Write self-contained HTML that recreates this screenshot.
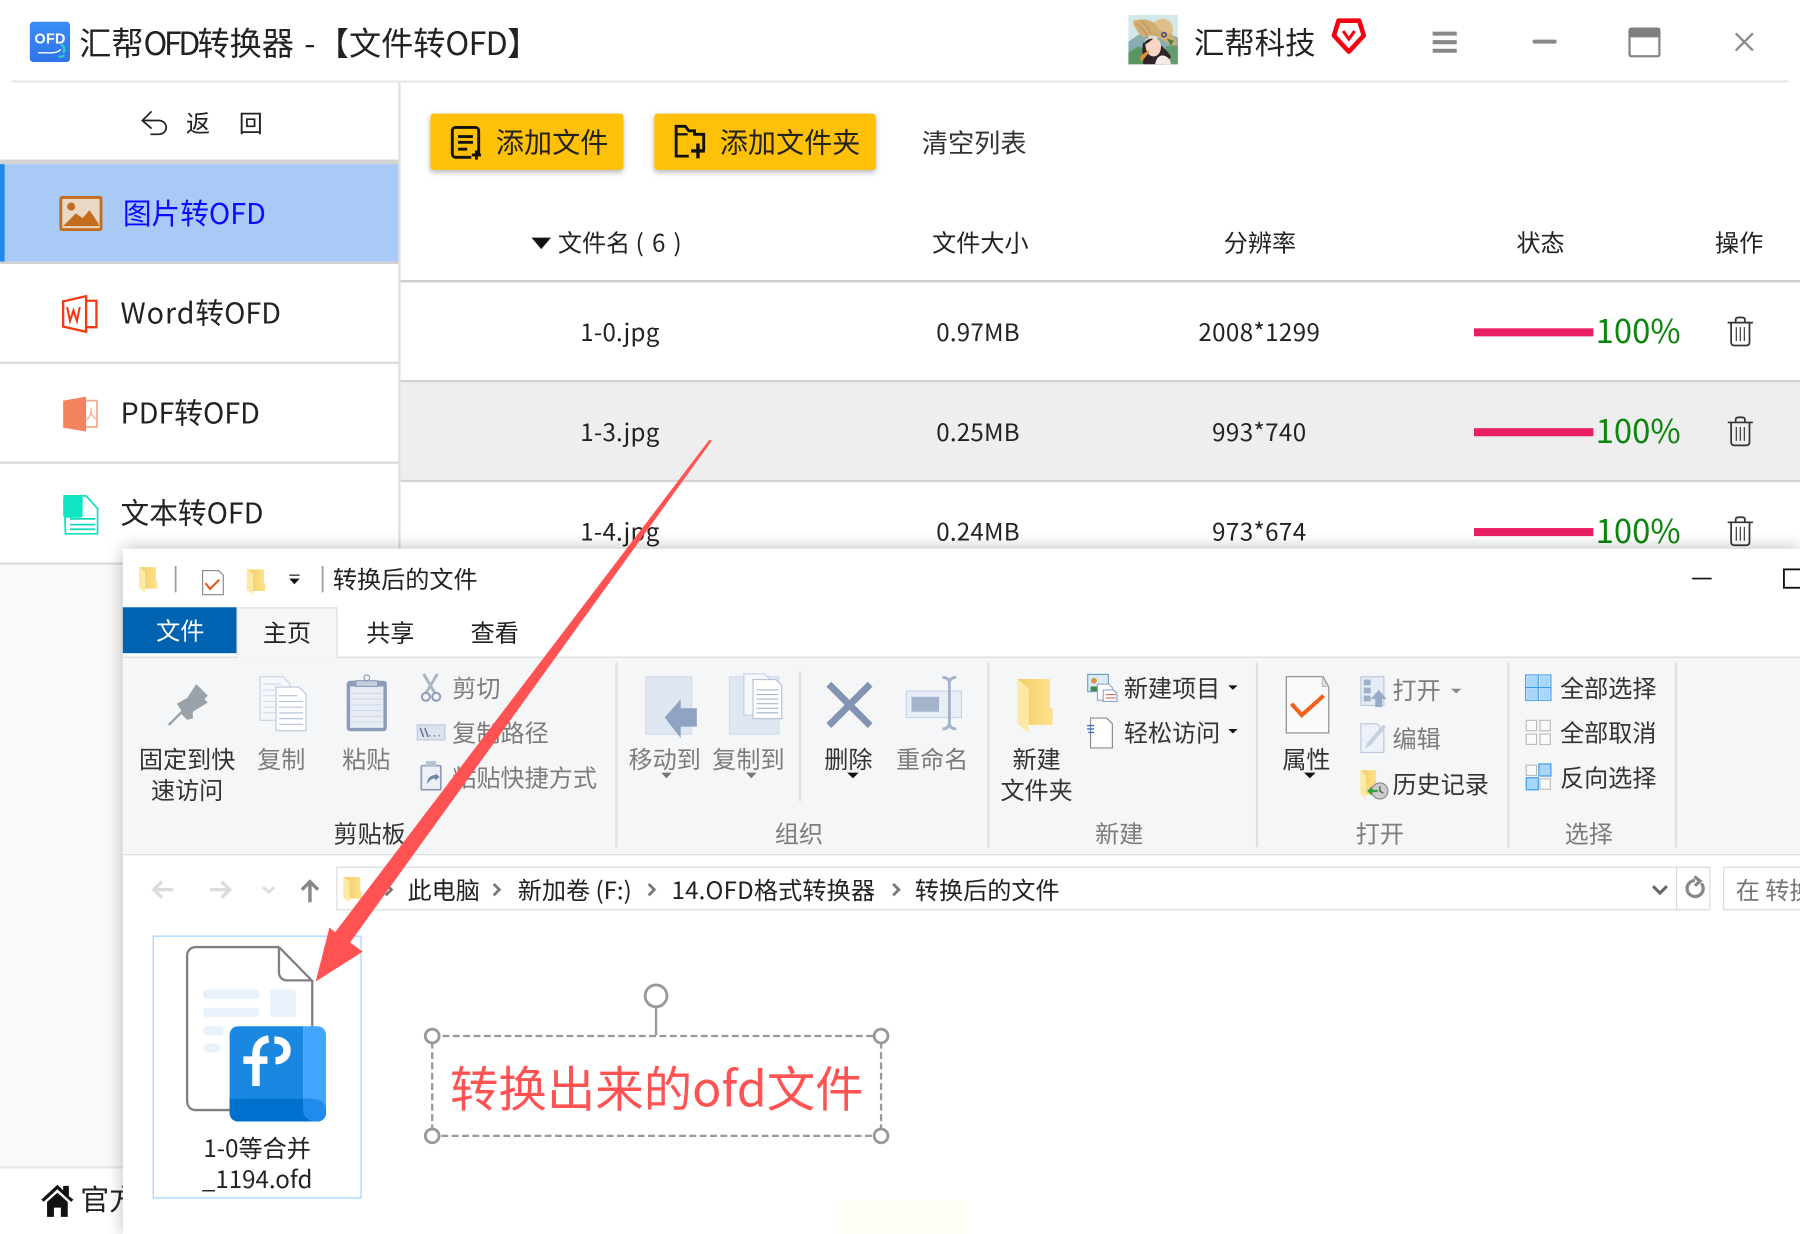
<!DOCTYPE html>
<html lang="zh-CN"><head><meta charset="utf-8"><title>汇帮OFD转换器</title>
<style>
html,body{margin:0;padding:0;background:#fff;width:1800px;height:1234px;overflow:hidden}
#w{position:absolute;left:0;top:0;width:1568px;height:1075px;transform:scale(1.14796);transform-origin:0 0;overflow:hidden;background:#fff;font-family:"Noto Sans CJK SC","Liberation Sans",sans-serif;color:#222}
.t{position:absolute;white-space:nowrap;line-height:0;font-size:21px}
.c{transform:translateX(-50%)}
.b{position:absolute}
.g{color:#7c7c7c}
.d{color:#333}
.r{letter-spacing:.2px}
svg{position:absolute;left:0;top:0}
</style></head><body><div id="w">

<!-- title bar -->
<div class="b" style="left:26px;top:19px;width:35px;height:35px;border-radius:3px;background:linear-gradient(#3a8df5,#2f74ea)"></div>
<div class="t" style="left:30px;top:34px;font-size:12.5px;font-weight:700;color:#fff;font-family:'Liberation Sans',sans-serif;letter-spacing:.3px">OFD</div>
<div class="t" style="left:69px;top:37px;font-size:28px">汇帮<span style="letter-spacing:-3px">OFD</span></div>
<div class="t" style="left:172px;top:37px;font-size:28px">转换器</div>
<div class="t" style="left:265px;top:37px;font-size:28px">-</div>
<div class="t" style="left:276px;top:37px;font-size:28px">【文件转<span style="letter-spacing:-.6px">OFD</span>】</div>
<div class="t" style="left:1040px;top:36px;font-size:26.5px">汇帮科技</div>
<div class="b" style="left:10px;top:70px;width:1548px;height:2px;background:#e8e8e8"></div>

<!-- sidebar -->
<div class="b" style="left:347px;top:72px;width:2px;height:420px;background:#e0e0e0"></div>
<div class="t" style="left:162px;top:107px;font-size:21px">返</div>
<div class="t" style="left:208px;top:107px;font-size:21px">回</div>
<div class="b" style="left:0;top:139px;width:347px;height:4px;background:#d4d4d4"></div>
<div class="b" style="left:0;top:143px;width:347px;height:85px;background:#a9caf6"></div>
<div class="b" style="left:0;top:143px;width:4px;height:85px;background:#2288ee"></div>
<div class="b" style="left:0;top:228px;width:347px;height:2px;background:#d0d0d0"></div>
<div class="b" style="left:0;top:315px;width:347px;height:2px;background:#d8d8d8"></div>
<div class="b" style="left:0;top:402px;width:347px;height:2px;background:#d8d8d8"></div>
<div class="b" style="left:0;top:490px;width:347px;height:526px;background:#f9f9f9;border-top:2px solid #ddd;box-sizing:border-box"></div>
<div class="b" style="left:0;top:1016px;width:347px;height:2px;background:#e8e8e8"></div>
<div class="t" style="left:107px;top:185px;font-size:25px;color:#0a0aff">图片转OFD</div>
<div class="t" style="left:105px;top:272px;font-size:25px"><span style="letter-spacing:.8px">Word</span>转OFD</div>
<div class="t" style="left:105px;top:359px;font-size:25px">PDF转OFD</div>
<div class="t" style="left:105px;top:446px;font-size:25px">文本转OFD</div>
<div class="t" style="left:70px;top:1044px;font-size:25px">官方网站</div>

<!-- buttons -->
<div class="b" style="left:375px;top:99px;width:168px;height:49px;background:#ffc107;border-radius:3px;box-shadow:0 2px 5px rgba(0,0,0,.28)"></div>
<div class="b" style="left:570px;top:99px;width:193px;height:49px;background:#ffc107;border-radius:3px;box-shadow:0 2px 5px rgba(0,0,0,.28)"></div>
<div class="t" style="left:432px;top:124px;font-size:24.5px">添加文件</div>
<div class="t" style="left:627px;top:124px;font-size:24.5px">添加文件夹</div>
<div class="t d" style="left:803px;top:124px;font-size:22.8px">清空列表</div>

<!-- table -->
<div class="t" style="left:486px;top:211px">文件名 <span style="letter-spacing:1.2px">( 6 )</span></div>
<div class="t" style="left:812px;top:211px">文件大小</div>
<div class="t" style="left:1066px;top:211px">分辨率</div>
<div class="t" style="left:1321px;top:211px">状态</div>
<div class="t" style="left:1494px;top:211px">操作</div>
<div class="b" style="left:349px;top:244px;width:1219px;height:2px;background:#ccc"></div>
<div class="b" style="left:349px;top:333px;width:1219px;height:85px;background:#eee"></div>
<div class="b" style="left:349px;top:331px;width:1219px;height:2px;background:#d2d2d2"></div>
<div class="b" style="left:349px;top:418px;width:1219px;height:2px;background:#d2d2d2"></div>

<div class="t c r" style="left:540px;top:289px">1-0.jpg</div><div class="t c r" style="left:852px;top:289px">0.97MB</div><div class="t c r" style="left:1097px;top:289px;letter-spacing:.35px">2008*1299</div>
<div class="t c r" style="left:540px;top:376px">1-3.jpg</div><div class="t c r" style="left:852px;top:376px">0.25MB</div><div class="t c r" style="left:1097px;top:376px;letter-spacing:.35px">993*740</div>
<div class="t c r" style="left:540px;top:463px">1-4.jpg</div><div class="t c r" style="left:852px;top:463px">0.24MB</div><div class="t c r" style="left:1097px;top:463px;letter-spacing:.35px">973*674</div>
<div class="b" style="left:1284px;top:286px;width:104px;height:7px;background:#e91e63"></div>
<div class="b" style="left:1284px;top:373px;width:104px;height:7px;background:#e91e63"></div>
<div class="b" style="left:1284px;top:460px;width:104px;height:7px;background:#e91e63"></div>
<div class="t" style="left:1390px;top:287.5px;font-size:28.6px;color:#0a860a">100%</div>
<div class="t" style="left:1390px;top:374.5px;font-size:28.6px;color:#0a860a">100%</div>
<div class="t" style="left:1390px;top:461.5px;font-size:28.6px;color:#0a860a">100%</div>

<!-- app icons -->
<svg width="1568" height="480" viewBox="0 0 1568 480" fill="none">
 <path d="M33 46h12c4 0 6-1 8-3" stroke="#fff" stroke-width="1.2"/><path d="M53 39c3 1 4 4 2 7M51 49c2 1 4 0 5-1" stroke="#2fd3c4" stroke-width="2"/>
 <!-- avatar -->
 <g transform="translate(983 13) scale(.86)">
  <rect width="50" height="50" fill="#d4e7e8"/>
  <path d="M0 27l12-8 14 6 14-6 10 4v27H0z" fill="#86adb2"/>
  <path d="M0 38l10-6 10 4v14H0z" fill="#5a9660"/>
  <path d="M38 32l12-2v20H34z" fill="#659c6e"/>
  <path d="M15 28c-2 6 0 16 0 22h22c2-5 6-6 6-8-3-5-7-8-12-13z" fill="#2f2528"/>
  <path d="M27 50c1-6 4-9 8-9 5 1 8 5 8 9z" fill="#f2ebe3"/>
  <path d="M17 25c4-3 12-3 15 2 2 5 1 11-3 14-5 3-10-1-11-6-1-3-1-7-1-10z" fill="#f5d6c4"/>
  <path d="M17 27c3-3 6-3 8-3-2 2-5 4-8 6z" fill="#2f2528"/>
  <path d="M5 6c8-3 16-1 21 2 5-5 13-5 17 0 2 5 3 8 1 11 3 4 5 8 5 12-4 0-10-2-15-6-7-5-14-5-19-2-5-5-11-12-10-17z" fill="#d2ad72"/>
  <path d="M26 8c5-5 13-5 17 0 2 5 3 8 1 11-6 0-13-3-18-11z" fill="#e0c08a"/>
  <path d="M8 9c5 3 10 9 12 14M13 6c4 4 8 8 10 13" stroke="#b08b54" stroke-width=".8"/>
  <circle cx="36" cy="20" r="3" fill="#4a4c92"/><circle cx="36" cy="20" r="1.300" fill="#e2b529"/><path d="M39 24l7 2-3 5z" fill="#4d7d3d"/>
  <path d="M13 41l7-5 1 2-5 6-2 3c-2 0-3-3-1-6z" fill="#e0903a"/>
 </g>
 <!-- diamond -->
 <path d="M1166 18h18l4 13-13 14-13-14z" stroke="#f40012" stroke-width="4" stroke-linejoin="round"/><path d="M1170 27l5 7 5-7" stroke="#f40012" stroke-width="2.6"/>
 <!-- hamburger -->
 <path d="M1248 27.500h21v3.500h-21zM1248 35h21v3.500h-21zM1248 42.500h21v3.500h-21z" fill="#888"/>
 <rect x="1335" y="34.500" width="21" height="3.500" rx="1.700" fill="#888"/>
 <rect x="1419.500" y="25" width="26" height="24" rx="1.500" stroke="#888" stroke-width="2"/><rect x="1419" y="24.500" width="27" height="8" fill="#7f7f7f"/>
 <path d="M1512 29l15 15M1527 29l-15 15" stroke="#8a8a8a" stroke-width="2"/>
 <!-- back -->
 <path d="M132 97l-8 8 8 7" stroke="#222" stroke-width="1.500"/><path d="M124 105h14c9 0 9 12 0 12h-7" stroke="#222" stroke-width="1.500"/>
 <!-- image -->
 <rect x="53" y="172" width="35" height="28" rx="1" fill="#e8d8c4" stroke="#c46c1e" stroke-width="2.500"/>
 <circle cx="62" cy="180" r="3.500" fill="#c46c1e"/><path d="M55 197l11-11 6 4 6-7 8 12v2H55z" fill="#c46c1e"/>
 <!-- word -->
 <path d="M55 262.500l20-4.500v31l-20-4.500z" stroke="#f23a12" stroke-width="2"/><path d="M75 262h9v23h-9" stroke="#f23a12" stroke-width="2"/>
 <path d="M58.500 267.500l2.500 12 3-9 3 9 2.500-12" stroke="#f23a12" stroke-width="1.800"/>
 <!-- pdf -->
 <path d="M55 349l20-3.500v30.500l-20-3.500z" fill="#f3835f"/><path d="M75 349h9.500v23h-9.500" stroke="#f5a98f" stroke-width="1.500"/><path d="M79 355c1 5-1 9-4 11M79 358c1 4 3 7 5 7" stroke="#f5a98f"/>
 <!-- txt -->
 <path d="M56 432h19l10 11v22H57z" stroke="#14e0bf" stroke-width="1.500"/><rect x="55" y="432" width="17" height="19" rx="2" fill="#0de6c0"/><path d="M61 452h22M61 457h22M61 461h22" stroke="#14d8ba" stroke-width="1.500"/>
 <!-- btn icons -->
 <rect x="394" y="111" width="23" height="26" rx="3" stroke="#111" stroke-width="2.500"/><path d="M399 119h13M399 124h13M399 130h8" stroke="#111" stroke-width="2.500"/><path d="M414 134v7M411 137.500h8" stroke="#ffc107" stroke-width="7"/><path d="M415 131v8M411 135h8" stroke="#111" stroke-width="2.500"/>
 <path d="M600 136h-11v-26h8l3 4h5v3h8v14" stroke="#111" stroke-width="2.500"/><path d="M589 117h10" stroke="#111" stroke-width="2"/><path d="M608 125v13M602 131.500h12" stroke="#111" stroke-width="3"/>
 <!-- triangle -->
 <path d="M463 207h17l-8.500 10z" fill="#111"/>
 <!-- trash -->
 <g id="tr" stroke="#333" stroke-width="1.500"><path d="M1505 281h22M1512 281v-3c0-2 8-2 8 0v3M1508 281v17c0 2 1 3 3 3h10c2 0 3-1 3-3v-17"/><path d="M1512.500 285v12M1516 285v12M1519.500 285v12" stroke-width="1"/></g>
 <use href="#tr" y="87"/><use href="#tr" y="174"/>
</svg>

<!-- explorer window -->
<div class="b" style="left:107px;top:478px;width:1461px;height:597px;background:#fff;box-shadow:0 0 14px rgba(0,0,0,.28)"></div>
<div class="b" style="left:730px;top:1045px;width:110px;height:30px;background:#fffff6"></div>
<div class="b" style="left:107px;top:529px;width:99px;height:40px;background:#0063b1"></div>
<div class="b" style="left:107px;top:572px;width:1461px;height:173px;background:#f5f6f7;border-top:1px solid #dadbdc;border-bottom:1px solid #dadbdc;box-sizing:border-box"></div>
<div class="b" style="left:206px;top:529px;width:88px;height:44px;background:#f5f6f7;border:1px solid #dadbdc;border-bottom:0;box-sizing:border-box"></div>

<div class="t" style="left:290px;top:504px">转换后的文件</div>
<div class="t c" style="left:157px;top:549px;color:#fff">文件</div>
<div class="t c" style="left:250px;top:551px">主页</div>
<div class="t c" style="left:340px;top:551px">共享</div>
<div class="t c" style="left:431px;top:551px">查看</div>

<div class="t c d" style="left:163px;top:661px">固定到快</div><div class="t c d" style="left:163px;top:688px">速访问</div>
<div class="t c g" style="left:245px;top:661px">复制</div><div class="t c g" style="left:319px;top:661px">粘贴</div>
<div class="t g" style="left:394px;top:599px">剪切</div><div class="t g" style="left:394px;top:638px">复制路径</div><div class="t g" style="left:394px;top:677px">粘贴快捷方式</div>
<div class="t c d" style="left:322px;top:726px">剪贴板</div>
<div class="t c g" style="left:579px;top:661px">移动到</div><div class="t c g" style="left:652px;top:661px">复制到</div>
<div class="t c d" style="left:739px;top:661px">删除</div><div class="t c g" style="left:812px;top:661px">重命名</div>
<div class="t c g" style="left:696px;top:726px">组织</div>
<div class="t c d" style="left:903px;top:661px">新建</div><div class="t c d" style="left:903px;top:688px">文件夹</div>
<div class="t d" style="left:979px;top:599px">新建项目</div><div class="t d" style="left:979px;top:638px">轻松访问</div>
<div class="t c g" style="left:975px;top:726px">新建</div>
<div class="t c d" style="left:1138px;top:660.5px">属性</div>
<div class="t g" style="left:1213px;top:601px">打开</div><div class="t g" style="left:1213px;top:643px">编辑</div><div class="t d" style="left:1213px;top:683px">历史记录</div>
<div class="t c g" style="left:1202px;top:726px">打开</div>
<div class="t d" style="left:1359px;top:599px">全部选择</div><div class="t d" style="left:1359px;top:638px">全部取消</div><div class="t d" style="left:1359px;top:677px">反向选择</div>
<div class="t c g" style="left:1384px;top:726px">选择</div>

<!-- address -->
<div class="b" style="left:293px;top:755px;width:1197px;height:38px;border:1px solid #d9d9d9;box-sizing:border-box"></div>
<div class="b" style="left:1460px;top:755px;width:1px;height:38px;background:#d9d9d9"></div>
<div class="b" style="left:1501px;top:755px;width:80px;height:38px;border:1px solid #d9d9d9;box-sizing:border-box"></div>
<div class="t" style="left:355px;top:775px">此电脑</div>
<div class="t" style="left:451px;top:775px">新加卷 (F:)</div>
<div class="t" style="left:585px;top:775px;letter-spacing:.15px">14.OFD格式转换器</div>
<div class="t" style="left:797px;top:775px">转换后的文件</div>
<div class="t g" style="left:1512px;top:775px;color:#777">在 转换</div>

<!-- file -->
<div class="b" style="left:133px;top:815px;width:182px;height:229px;border:1px solid #99d1ff;box-sizing:border-box"></div>
<div class="t c" style="left:224px;top:999.5px">1-0等合并</div>
<div class="t c" style="left:224px;top:1026.5px">_1194.ofd</div>

<!-- annotation text -->
<div class="t" style="left:392px;top:947px;font-size:42.2px;color:#ff5252">转换出来的ofd文件</div>

<svg width="1568" height="1075" viewBox="0 0 1568 1075" fill="none">
 <defs>
  <linearGradient id="f" x1="0" y1="0" x2="1" y2="0"><stop offset="0" stop-color="#f3cc68"/><stop offset="1" stop-color="#fde28c"/></linearGradient>
  <g id="fld"><path d="M0 0H28.600V25.500H31V40H10V8Z" fill="url(#f)"/><path d="M0 0L10 8V47L0 38.500Z" fill="#fde9a6"/></g>
 </defs>
 <!-- qat -->
 <use href="#fld" transform="translate(121 494) scale(.52 .47)"/>
 <path d="M153 493v23M281 493v23" stroke="#9a9a9a" stroke-width="1.500"/>
 <path d="M176.500 497h14l4 4v17h-18z" fill="#fff" stroke="#888"/><path d="M179 508l4 5 8-8" stroke="#e8571a" stroke-width="1.800"/>
 <use href="#fld" transform="translate(215 496) scale(.52 .47)"/>
 <path d="M252 501h9" stroke="#111"/><path d="M252 504h9l-4.500 5z" fill="#111"/>
 <path d="M1474 504h17" stroke="#111" stroke-width="1.500"/><rect x="1554" y="496" width="20" height="16" stroke="#111" stroke-width="1.600"/>

 <!-- separators -->
 <path d="M537 577v161M861 577v161M1095 577v161M1314 577v161M1460 577v161M697 585v113" stroke="#dfe0e2" stroke-width="2"/>

 <!-- pin -->
 <path d="M146 631l12-12-4-6 9-5 8-12 10 10-3 3 3 3-13 8 0 6-5 1-5-5-10 10z" fill="#98a2a8"/>
 <!-- copy -->
 <path d="M226.500 589.500h20l6 6v32h-26z" fill="#f4f7fb" stroke="#c9d2e2"/><path d="M229 596h16M229 601h21M229 606h21M229 611h21M229 616h21M229 621h21" stroke="#d5dcea"/>
 <path d="M240.500 598.500h20l6 6v32h-26z" fill="#fff" stroke="#b9c6dc"/><path d="M243 606h16M243 611h21M243 616h21M243 621h21M243 626h21M243 631h21" stroke="#b8c4da"/>
 <!-- paste -->
 <rect x="302" y="593" width="35" height="44" rx="3" fill="#8c9dbc"/><rect x="305" y="598" width="29" height="36" fill="#e8edf5"/><path d="M306 604h27M306 609h27M306 614h27M306 619h27M306 624h27M306 629h27" stroke="#cfd8e8"/><path d="M310 593h19v5h-19z" fill="#c5cedf" stroke="#8c9dbc"/><circle cx="319.500" cy="590.500" r="2.500" stroke="#8c9dbc"/>
 <!-- scissors -->
 <path d="M369 587l10 17M381 587l-10 17" stroke="#a9b4c4" stroke-width="2.500"/><circle cx="371" cy="607" r="3.500" stroke="#8e9fbc" stroke-width="1.800"/><circle cx="380" cy="607" r="3.500" stroke="#8e9fbc" stroke-width="1.800"/>
 <!-- path -->
 <rect x="363.500" y="631.500" width="24" height="13" fill="#dbe3f1" stroke="#bcc8dc"/><path d="M366 634l3 8M370 634l3 8M374 641h1M378 641h1M382 641h1" stroke="#5b6b80" stroke-width="1.200"/>
 <!-- shortcut -->
 <rect x="367" y="667" width="17" height="21" rx="1" fill="#edf1f7" stroke="#8c9dbc" stroke-width="1.500"/><path d="M371 663h9v5h-9z" fill="#b6c2d6"/><path d="M372 683c0-5 3-8 8-8l-1-2 4 4-4 3 0-2c-3 0-5 2-7 5z" fill="#6e86a8"/>

 <!-- move -->
 <rect x="562.500" y="589.500" width="40" height="50" fill="#dfe7f3" stroke="#d2dcea"/><path d="M607 617v16h-14v10l-14-18 14-16v8z" fill="#8fa4c2"/>
 <!-- copyto -->
 <rect x="635.500" y="589.500" width="43" height="50" fill="#dfe7f3" stroke="#d2dcea"/><path d="M648 587h18l4 4v32h-22z" fill="#f5f8fc" stroke="#c5d0e2"/><path d="M656 592h20l5 5v29h-25z" fill="#fff" stroke="#b5c2d8"/><path d="M659 601h19M659 605h19M659 609h19M659 613h19M659 617h19M659 621h19" stroke="#a8b6cc"/>
 <!-- delete -->
 <path d="M722 596l36 36M758 596l-36 36" stroke="#8394b2" stroke-width="6"/>
 <!-- rename -->
 <rect x="789.500" y="602" width="48" height="23" fill="#e8eef8" stroke="#c6d3e8"/><rect x="794" y="607" width="24" height="13" fill="#a3b3cb"/>
 <path d="M821 590c3 0 5 1 6 4v37c-1 3-3 4-6 4M833 590c-3 0-5 1-6 4M833 635c-3 0-5-1-6-4" stroke="#a3b3cb" stroke-width="2.500"/>
 <!-- new folder -->
 <use href="#fld" transform="translate(886 591.500)"/>
 <!-- new item -->
 <rect x="947.500" y="587.500" width="18" height="15" fill="#dceaf6" stroke="#6f9dc6"/><circle cx="953" cy="593" r="2.500" fill="#d8943e"/><path d="M950 602v-4h6v4z" fill="#3a8b52"/><path d="M956 596h10l3 3v11h-13z" fill="#fff" stroke="#9aa8bc"/><path d="M961 601h9l3 3v7h-12z" fill="#fff" stroke="#8ea6c8"/><path d="M963 605h9M963 608h9" stroke="#d86a5c"/>
 <!-- easy -->
 <path d="M950 625.500h14l5 5v21h-19z" fill="#fff" stroke="#8a8a8a"/><path d="M947 632h6M947 635h6M948 638h5" stroke="#3f6fc2" stroke-width="1.200"/>
 <path d="M1070 597h8l-4 4zM1070 635h8l-4 4z" fill="#111"/>
 <!-- small dropdowns -->
 <path d="M576 673h9l-4.500 5zM650 673h9l-4.500 5z" fill="#777"/><path d="M738 673h10l-5 5zM1136 673h10l-5 5z" fill="#111"/><path d="M1264 600h9l-4.500 4z" fill="#888"/>
 <!-- properties -->
 <path d="M1120.500 589.500h32l5 9v40h-37z" fill="#fafafa" stroke="#8a8a8a"/><path d="M1152 590v8h5" fill="#e0e0e0" stroke="#bbb"/><path d="M1125 613l9 10 19-17" stroke="#f2601a" stroke-width="3.500"/>
 <!-- open -->
 <rect x="1185.500" y="589.500" width="20" height="25" fill="#e5ebf4" stroke="#bac7da"/><path d="M1188 592h6v5h-6zM1188 599h6v5h-6zM1188 606h6v5h-6z" fill="#9eaec6"/><path d="M1201 601l7 8h-4v7h-6v-7h-4z" fill="#98aac4"/>
 <!-- edit -->
 <path d="M1185.500 630.500h14l6 6v19h-20z" fill="#edf1f8" stroke="#bac7da"/><path d="M1189 652l2-5 13-15c2-1 3 0 3 2l-13 15z" fill="#c7d0de"/>
 <!-- history -->
 <use href="#fld" transform="translate(1185 671) scale(.48 .53)"/><circle cx="1202" cy="689" r="7" fill="#ccc" stroke="#888"/><path d="M1202 685v4l3 2" stroke="#444"/><path d="M1191 689l4 4 0-3h5v-2h-5v-3z" fill="#2fa13a"/>
 <!-- select all -->
 <rect x="1329" y="588" width="22" height="22" fill="#fff" stroke="#3a99ee"/><path d="M1330 589h9.500v9.500h-9.500zM1341 589h9v9.500h-9zM1330 600h9.500v9h-9.500zM1341 600h9v9h-9z" fill="#a8d6fb"/><path d="M1340 588v22M1329 599h22" stroke="#3a99ee"/>
 <rect x="1329.500" y="627.500" width="9" height="9" fill="#fafafa" stroke="#bbb"/><rect x="1341.500" y="627.500" width="9" height="9" fill="#fafafa" stroke="#bbb"/><rect x="1329.500" y="639.500" width="9" height="9" fill="#fafafa" stroke="#bbb"/><rect x="1341.500" y="639.500" width="9" height="9" fill="#fafafa" stroke="#bbb"/>
 <rect x="1329.500" y="666.500" width="9" height="9" fill="#fafafa" stroke="#bbb"/><rect x="1340.500" y="665.500" width="10.500" height="10.500" fill="#a8d6fb" stroke="#3a99ee"/><rect x="1329.500" y="677.500" width="10.500" height="10.500" fill="#a8d6fb" stroke="#3a99ee"/><rect x="1341.500" y="678.500" width="9" height="9" fill="#fafafa" stroke="#bbb"/>

 <!-- nav -->
 <path d="M151 775h-17M141 768l-7 7 7 7" stroke="#dcdcdc" stroke-width="3"/>
 <path d="M183 775h17M193 768l7 7-7 7" stroke="#dcdcdc" stroke-width="3"/>
 <path d="M229 773l5 4 5-4" stroke="#dcdcdc" stroke-width="2.500"/>
 <path d="M270 786v-17M263 775l7-7 7 7" stroke="#888" stroke-width="3"/>
 <use href="#fld" transform="translate(299 764) scale(.52 .47)"/>
 <path d="M430 770l5 5-5 5M565 770l5 5-5 5M778 770l5 5-5 5M336 770l5 5-5 5" stroke="#777" stroke-width="2.400"/>
 <path d="M1440 772l6 6 6-6" stroke="#666" stroke-width="2.600"/>
 <path d="M1482 769.500a7 7 0 1 1-5.500-2.500M1476 763.500l5 4-4.500 4" stroke="#888" stroke-width="2.800"/>

 <!-- file icon -->
 <path d="M243 825h-72c-5 0-8 3-8 8v126c0 5 3 8 8 8h40M243 825v22c0 4 3 7 7 7h21.500L243 825M272 854v50" stroke="#808080" stroke-width="2"/>
 <g fill="#e9f2fb"><rect x="177" y="862" width="49" height="8" rx="3"/><rect x="235" y="862" width="23" height="24" rx="3"/><rect x="177" y="878" width="49" height="8" rx="3"/><rect x="177" y="894" width="18" height="8" rx="3"/><rect x="177" y="909" width="15" height="8" rx="3"/></g>
 <path d="M208 894h56v83h-56c-5 0-8-3-8-8v-67c0-5 3-8 8-8z" fill="#1a88e0"/>
 <path d="M264 894h12c5 0 8 3 8 8v67c0 5-3 8-8 8h-12z" fill="#42a6ff"/>
 <path d="M200 957h64c0 0 20-2 20 12 0 5-3 8-8 8h-68c-5 0-8-3-8-8z" fill="#0070cf"/>
 <path d="M264 957c12 0 20 0 20 12 0 5-3 8-8 8-7 0-12-4-12-10z" fill="#1f8ceb"/>
 <path d="M223 946v-28c0-7 4-12 11-13" stroke="#fff" stroke-width="6.500"/><path d="M212 923.500h21" stroke="#fff" stroke-width="6.500"/>
 <path d="M239 906c8 0 11 4 11 9s-4 9-10 9" stroke="#fff" stroke-width="6.500"/>

 <!-- annotation -->
 <rect x="376.500" y="902.500" width="391" height="87" stroke="#999" stroke-width="2" stroke-dasharray="6 3"/>
 <path d="M571.500 878v24" stroke="#999" stroke-width="2"/>
 <circle cx="571.500" cy="867.500" r="9.500" fill="#fff" stroke="#999" stroke-width="2.500"/>
 <g fill="#fff" stroke="#999" stroke-width="2.500"><circle cx="376.500" cy="902.500" r="6"/><circle cx="767.500" cy="902.500" r="6"/><circle cx="376.500" cy="989.500" r="6"/><circle cx="767.500" cy="989.500" r="6"/></g>

 <!-- home -->
 <path d="M36 1045l14-13 5 5v-4h5v9l4 3-2 2-12-11-12 11z" fill="#111"/><path d="M41 1047l9-8 9 8v13h-6v-8h-6v8h-6z" fill="#111"/>
</svg>

<!-- red arrow -->
<svg width="1568" height="1075" viewBox="0 0 1568 1075" fill="none"><path d="M618 383L620 384L305 821L316 829L275 855L287 808L292 812Z" fill="#ff5252"/></svg>
</div></body></html>
